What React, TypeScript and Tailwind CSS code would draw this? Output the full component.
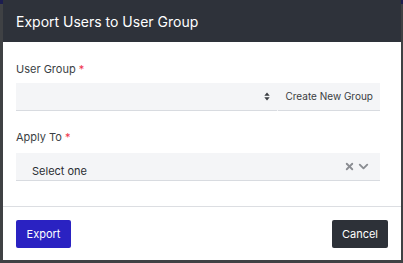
import { ChevronDown, X } from "lucide-react";

function Label({ text }: { text: string }) {
  return (
    <div className="text-[11px] leading-4 text-[#3b3f45]">
      {text} <span className="text-[#f0324b]">*</span>
    </div>
  );
}

function SortIcon() {
  return (
    <svg width="6" height="9" viewBox="0 0 6 9" className="text-[#3a3d42]">
      <path d="M3 0.5 L5.7 3.7 H0.3 Z" fill="currentColor" />
      <path d="M3 8.5 L5.7 5.3 H0.3 Z" fill="currentColor" />
    </svg>
  );
}

export default function App() {
  return (
    <div
      className="w-[403px] h-[263px] bg-[#3f4144] flex flex-col"
      style={{ fontFamily: "Inter, 'Noto Sans', sans-serif" }}
    >
      <div className="h-[4px] bg-[#1c1d4f] shrink-0 -mb-[4px]" />
      <div className="mx-[3px] w-[398px] h-[260px] bg-white flex flex-col overflow-hidden">
        <div className="h-[42px] bg-[#2e323a] flex items-center px-[13px] shrink-0">
          <h1 className="text-[14px] text-white">Export Users to User Group</h1>
        </div>

        <div className="px-[13px] pt-[19px] flex flex-col">
          <Label text="User Group" />
          <div className="mt-[6px] h-[28px] w-[364px] bg-[#f4f5f7] flex">
            <div className="flex-1 flex items-center justify-end pr-[7px] border-b border-[#d8dbe0]">
              <SortIcon />
            </div>
            <div className="ml-[1px] flex items-center pl-[7px] pr-[7px] text-[10px] text-[#3a3d42] border-b border-[#d8dbe0]">
              Create New Group
            </div>
          </div>

          <div className="mt-[18px]">
            <Label text="Apply To" />
          </div>
          <div className="mt-[8px] h-[28px] w-[364px] bg-[#f4f5f7] border-b border-[#d8dbe0] flex items-end pb-[1px]">
            <div className="flex-1 pl-[16px] text-[11px] text-[#2b2e33]">
              Select one
            </div>
            <div className="flex items-center gap-[1px] pr-[9px] pb-[5px] text-[#8a8d92]">
              <X size={11} strokeWidth={4} />
              <ChevronDown size={15} strokeWidth={3} />
            </div>
          </div>
        </div>

        <div className="mt-[25px] border-t border-[#dcdee2]" />

        <div className="px-[13px] pt-[13px] flex justify-between">
          <button className="w-[55px] h-[28px] rounded-[2px] bg-[#2a22c2] text-white text-[11px]">
            Export
          </button>
          <button className="w-[56px] h-[28px] rounded-[2px] bg-[#2d3138] text-white text-[11px]">
            Cancel
          </button>
        </div>
      </div>
    </div>
  );
}
